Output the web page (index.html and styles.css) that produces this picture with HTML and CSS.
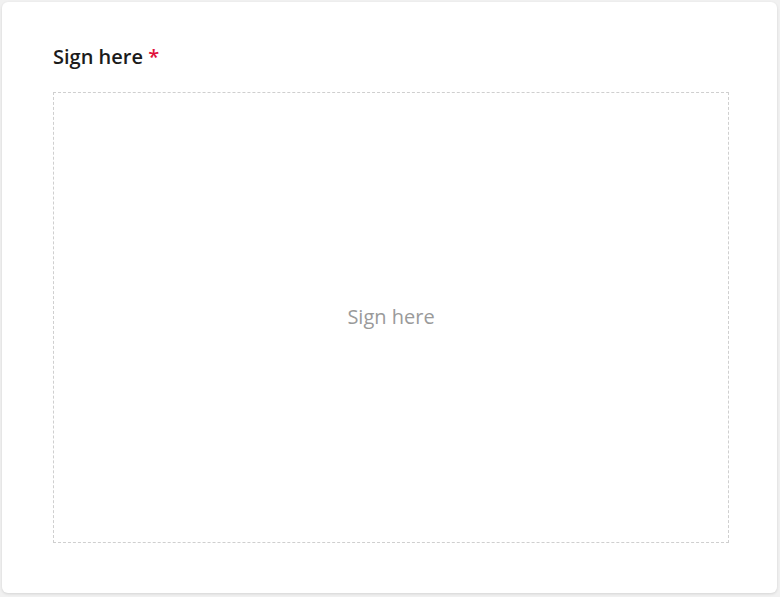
FILE: index.html
```html
<!DOCTYPE html>
<html lang="en">
<head>
    <meta charset="UTF-8">
    <meta name="viewport" content="width=device-width, initial-scale=1.0">
    <title>signature</title>
    <link rel="stylesheet" href="styles.css">
</head>
<body>
    <div class="card">
        <div class="field-label">Sign here <span class="required">*</span></div>
        <div class="sign-pad">
            <span class="sign-placeholder">Sign here</span>
        </div>
    </div>
</body>
</html>
```

FILE: styles.css
```css
/* page styles */

html, body {
    height: 100%;
}
body {
    margin: 0;
    padding: 2px 3px 4px 2px;
    box-sizing: border-box;
    background-color: #f1f1f1;
    font-family: 'Open Sans', 'Noto Sans', sans-serif;
}
.card {
    box-sizing: border-box;
    height: 100%;
    background-color: #ffffff;
    border-radius: 6px;
    box-shadow: 0 1px 3px rgba(0, 0, 0, 0.12);
    padding: 43px 48px 0 51px;
}
.field-label {
    font-size: 20px;
    font-weight: 600;
    line-height: 26px;
    color: #1b1b1b;
    margin: -1px 0 22px 0;
}
.required {
    color: #e0103a;
}
.sign-pad {
    height: 451px;
    box-sizing: border-box;
    border: 1px dashed #cfcfcf;
    display: flex;
    align-items: center;
    justify-content: center;
}
.sign-placeholder {
    font-size: 20px;
    line-height: 26px;
    color: #9a9a9a;
    margin-top: -2px;
}
```
